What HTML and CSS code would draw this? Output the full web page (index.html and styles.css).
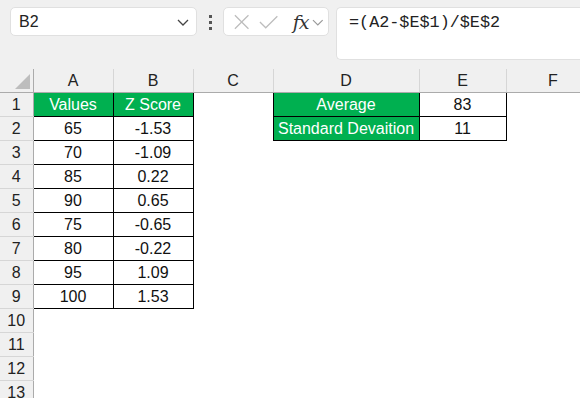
FILE: index.html
```html
<!DOCTYPE html>
<html>
<head>
  <title>Z Score</title>
  <link rel="stylesheet" href="styles.css">
</head>
<body>
  <div class="app">
    <div class="toolbar">
      <div class="namebox">
        <span>B2</span>
        <svg class="chev" width="14" height="10" viewBox="0 0 14 10"><path d="M2 3 L7 8 L12 3" fill="none" stroke="#444" stroke-width="1.3"/></svg>
      </div>
      <div class="dots"><i></i><i></i><i></i></div>
      <div class="fxbox">
        <svg width="20" height="20" viewBox="0 0 20 20"><path d="M3 3 L17 17 M17 3 L3 17" stroke="#bdbdbd" stroke-width="1.3" fill="none"/></svg>
        <svg width="22" height="20" viewBox="0 0 22 20"><path d="M2 10 L8 16 L20 4" stroke="#bdbdbd" stroke-width="1.3" fill="none"/></svg>
        <span class="fx">fx</span>
        <svg width="12" height="10" viewBox="0 0 12 10"><path d="M1 3 L6 8 L11 3" fill="none" stroke="#999" stroke-width="1.2"/></svg>
      </div>
      <div class="formula">=(A2-$E$1)/$E$2</div>
    </div>

    <table class="sheet">
      <colgroup>
        <col class="w-rh"><col class="w-a"><col class="w-b"><col class="w-c"><col class="w-d"><col class="w-e"><col class="w-f">
      </colgroup>
      <tr class="colhead">
        <th class="corner"><span class="tri"></span></th>
        <th>A</th><th>B</th><th>C</th><th>D</th><th>E</th><th>F</th>
      </tr>
      <tr>
        <th class="rowhead">1</th>
        <td class="box green">Values</td><td class="box green">Z Score</td><td></td>
        <td class="box green">Average</td><td class="box">83</td><td></td>
      </tr>
      <tr>
        <th class="rowhead">2</th>
        <td class="box">65</td><td class="box">-1.53</td><td></td>
        <td class="box green">Standard Devaition</td><td class="box">11</td><td></td>
      </tr>
      <tr><th class="rowhead">3</th><td class="box">70</td><td class="box">-1.09</td><td></td><td></td><td></td><td></td></tr>
      <tr><th class="rowhead">4</th><td class="box">85</td><td class="box">0.22</td><td></td><td></td><td></td><td></td></tr>
      <tr><th class="rowhead">5</th><td class="box">90</td><td class="box">0.65</td><td></td><td></td><td></td><td></td></tr>
      <tr><th class="rowhead">6</th><td class="box">75</td><td class="box">-0.65</td><td></td><td></td><td></td><td></td></tr>
      <tr><th class="rowhead">7</th><td class="box">80</td><td class="box">-0.22</td><td></td><td></td><td></td><td></td></tr>
      <tr><th class="rowhead">8</th><td class="box">95</td><td class="box">1.09</td><td></td><td></td><td></td><td></td></tr>
      <tr><th class="rowhead">9</th><td class="box">100</td><td class="box">1.53</td><td></td><td></td><td></td><td></td></tr>
      <tr><th class="rowhead">10</th><td></td><td></td><td></td><td></td><td></td><td></td></tr>
      <tr><th class="rowhead">11</th><td></td><td></td><td></td><td></td><td></td><td></td></tr>
      <tr><th class="rowhead">12</th><td></td><td></td><td></td><td></td><td></td><td></td></tr>
      <tr><th class="rowhead">13</th><td></td><td></td><td></td><td></td><td></td><td></td></tr>
    </table>
  </div>
</body>
</html>
```

FILE: styles.css
```css
body,
html {
  margin: 0;
  padding: 0;
  background: #fff;
  overflow: hidden;
}

.app {
  width: 580px;
  height: 398px;
  font-family: "Liberation Sans", Arial, sans-serif;
  color: #111;
}

.toolbar {
  display: flex;
  align-items: flex-start;
  height: 69px;
  padding: 7px 0 0 10px;
  box-sizing: border-box;
  background: #f0f0f0;
}

.namebox {
  display: flex;
  align-items: center;
  justify-content: space-between;
  width: 187px;
  height: 29px;
  box-sizing: border-box;
  padding: 0 6px 0 8px;
  background: #fff;
  border: 1px solid #e0e0e0;
  border-radius: 5px;
  font-size: 16px;
  color: #222;
}

.dots {
  display: flex;
  flex-direction: column;
  gap: 3px;
  margin: 8px 11px 0 12px;
}

.dots i {
  display: block;
  width: 3px;
  height: 3px;
  background: #555;
}

.fxbox {
  display: flex;
  align-items: center;
  gap: 7px;
  width: 106px;
  height: 29px;
  box-sizing: border-box;
  padding: 0 4px 0 8px;
  background: #fff;
  border: 1px solid #e0e0e0;
  border-radius: 5px;
}

.fx {
  font-family: "DejaVu Serif", "Liberation Serif", serif;
  font-style: italic;
  font-size: 19px;
  line-height: 20px;
  color: #333;
  margin-left: 6px;
  margin-right: -3px;
  letter-spacing: -1px;
}

.formula {
  flex: 1;
  height: 53px;
  margin-left: 7px;
  box-sizing: border-box;
  padding: 5px 0 0 12px;
  background: #fff;
  border: 1px solid #e0e0e0;
  border-right: none;
  border-radius: 5px 0 0 5px;
  font-family: "Liberation Mono", "DejaVu Sans Mono", monospace;
  font-size: 16.8px;
  color: #222;
}

.sheet {
  border-collapse: collapse;
  table-layout: fixed;
  width: 600px;
  font-size: 16px;
}

.w-rh { width: 33px; }
.w-a { width: 80px; }
.w-b { width: 80px; }
.w-c { width: 80px; }
.w-d { width: 146px; }
.w-e { width: 87px; }
.w-f { width: 94px; }

.sheet td,
.sheet th {
  height: 23px;
  padding: 0;
  text-align: center;
  font-weight: normal;
  white-space: nowrap;
  overflow: hidden;
}

.colhead th {
  background: #f0f0f0;
  color: #222;
  border-right: 1px solid #d6d6d6;
  border-bottom: 1px solid #ababab;
}

.colhead .corner {
  position: relative;
  border-right: 1px solid #ababab;
}

.tri {
  position: absolute;
  right: 3px;
  bottom: 3px;
  width: 0;
  height: 0;
  border-left: 15px solid transparent;
  border-bottom: 15px solid #bdbdbd;
}

.rowhead {
  background: #f0f0f0;
  color: #222;
  border-right: 1px solid #ababab;
  border-bottom: 1px solid #d6d6d6;
}

.box {
  border: 1px solid #000;
}

.green {
  background: #00b050;
  color: #fff;
}
```
